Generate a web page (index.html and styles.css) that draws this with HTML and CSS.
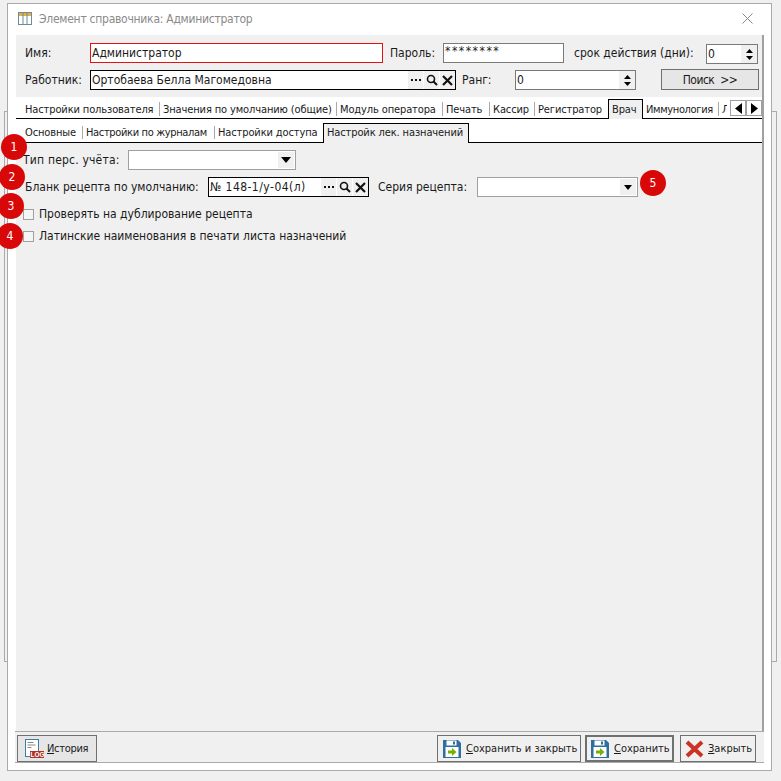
FILE: index.html
```html
<!DOCTYPE html>
<html lang="ru">
<head>
<meta charset="utf-8">
<title>Элемент справочника: Администратор</title>
<link rel="stylesheet" href="styles.css">
</head>
<body>
<div class="backwin"></div>
<main class="window">
  <header class="titlebar">
    <svg class="appicon" width="14" height="13" viewBox="0 0 14 13"><rect x="0.5" y="0.5" width="13" height="12" fill="#fff" stroke="#6f8a9c"/><rect x="1" y="1" width="12" height="3" fill="#e0b040"/><path d="M5 1v11M9 1v11" stroke="#6f8a9c" fill="none"/></svg>
    <span class="title">Элемент справочника: Администратор</span>
    <svg class="closeicon" width="11" height="11" viewBox="0 0 11 11"><path d="M0.5 0.5l10 10M10.5 0.5l-10 10" stroke="#888" fill="none"/></svg>
  </header>
  <section class="panel">
    <div class="head">
      <div class="hrow">
        <label class="lbl w-name">Имя:</label>
        <div class="field f-name"><span class="val">Администратор</span></div>
        <label class="lbl w-pass">Пароль:</label>
        <div class="field f-pass"><span class="val v-pass">********</span></div>
        <label class="lbl w-term">срок действия (дни):</label>
        <div class="field f-term"><span class="val">0</span>
          <span class="spin"><svg width="7" height="4" viewBox="0 0 7 4"><path d="M3.5 0L7 4H0z"/></svg><svg width="7" height="4" viewBox="0 0 7 4"><path d="M0 0h7L3.500 4z"/></svg></span>
        </div>
      </div>
      <div class="hrow hrow2">
        <label class="lbl w-name">Работник:</label>
        <div class="field f-worker"><span class="val">Ортобаева Белла Магомедовна</span>
          <span class="tool"><svg width="10" height="2" viewBox="0 0 10 2"><path d="M0 0h2v2H0zM4 0h2v2H4zM8 0h2v2H8z" fill="#111"/></svg></span>
          <span class="tool"><svg width="12" height="12" viewBox="0 0 12 12"><circle cx="5" cy="5" r="3.500" fill="none" stroke="#111" stroke-width="1.600"/><path d="M7.500 7.500l3.500 3.500" stroke="#111" stroke-width="2"/></svg></span>
          <span class="tool"><svg width="11" height="11" viewBox="0 0 11 11"><path d="M1 1l9 9M10 1l-9 9" stroke="#111" stroke-width="2.200"/></svg></span>
        </div>
        <label class="lbl w-rank">Ранг:</label>
        <div class="field f-rank"><span class="val">0</span>
          <span class="spin"><svg width="7" height="4" viewBox="0 0 7 4"><path d="M3.5 0L7 4H0z"/></svg><svg width="7" height="4" viewBox="0 0 7 4"><path d="M0 0h7L3.500 4z"/></svg></span>
        </div>
        <button class="search">Поиск &nbsp;&gt;&gt;</button>
      </div>
    </div>
    <nav class="tabs tabs1">
      <span class="tab">Настройки пользователя</span>
      <span class="tab">Значения по умолчанию (общие)</span>
      <span class="tab">Модуль оператора</span>
      <span class="tab">Печать</span>
      <span class="tab">Кассир</span>
      <span class="tab plain">Регистратор</span>
      <span class="tab active">Врач</span>
      <span class="tab tight">Иммунология</span>
      <span class="tab plain clip">Л</span>
      <span class="arrow"><svg width="7" height="11" viewBox="0 0 7 11"><path d="M7 0v11L0 5.500z"/></svg></span>
      <span class="arrow"><svg width="7" height="11" viewBox="0 0 7 11"><path d="M0 0v11L7 5.500z"/></svg></span>
    </nav>
    <nav class="tabs tabs2">
      <span class="tab">Основные</span>
      <span class="tab tight">Настройки по журналам</span>
      <span class="tab plain">Настройки доступа</span>
      <span class="tab active">Настройк лек. назначений</span>
    </nav>
    <div class="content">
      <div class="crow crow1">
        <label class="clbl c-type">Тип перс. учёта:</label>
        <div class="combo c-wide"><span class="drop big"><svg width="10" height="6" viewBox="0 0 10 6"><path d="M0 0h10L5 6z"/></svg></span></div>
      </div>
      <div class="crow crow2">
        <label class="clbl c-blank">Бланк рецепта по умолчанию:</label>
        <div class="field f-blank"><span class="val v-blank">№ 148-1/у-04(л)</span>
          <span class="tool"><svg width="10" height="2" viewBox="0 0 10 2"><path d="M0 0h2v2H0zM4 0h2v2H4zM8 0h2v2H8z" fill="#111"/></svg></span>
          <span class="tool"><svg width="12" height="12" viewBox="0 0 12 12"><circle cx="5" cy="5" r="3.500" fill="none" stroke="#111" stroke-width="1.600"/><path d="M7.500 7.500l3.500 3.500" stroke="#111" stroke-width="2"/></svg></span>
          <span class="tool"><svg width="11" height="11" viewBox="0 0 11 11"><path d="M1 1l9 9M10 1l-9 9" stroke="#111" stroke-width="2.200"/></svg></span>
        </div>
        <label class="clbl c-series">Серия рецепта:</label>
        <div class="combo c-series-box"><span class="drop"><svg width="8" height="5" viewBox="0 0 8 5"><path d="M0 0h8L4 5z"/></svg></span></div>
      </div>
      <div class="crow crow3"><span class="check"></span><label class="clbl">Проверять на дублирование рецепта</label></div>
      <div class="crow crow4"><span class="check"></span><label class="clbl">Латинские наименования в печати листа назначений</label></div>
    </div>
    <footer class="foot">
      <button class="btn b-hist">
        <svg width="19" height="20" viewBox="0 0 19 20"><rect x="0.500" y="0.500" width="13" height="17" fill="#fff" stroke="#3d7ba8"/><path d="M2.500 3.500h6M2.500 6h8M2.500 8.500h4" stroke="#888" fill="none"/><rect x="5" y="12" width="14" height="7" fill="#b03028"/><text x="5.600" y="18" class="logtxt">LOG</text></svg>
        <span><u>И</u>стория</span>
      </button>
      <span class="spacer"></span>
      <button class="btn b-saveclose">
        <svg width="18" height="18" viewBox="0 0 18 18"><path d="M0 0h15l3 3v15H0z" fill="#2f6f9f"/><rect x="3.500" y="0.500" width="10" height="5" fill="#fff"/><rect x="10" y="1.500" width="2" height="3" fill="#2f6f9f"/><rect x="2.500" y="7" width="13" height="10" fill="#fff"/><path d="M5 10.500h4V8l4.500 4L9 16v-2.500H5z" fill="#76b000"/></svg>
        <span><u>С</u>охранить и закрыть</span>
      </button>
      <button class="btn b-save">
        <svg width="18" height="18" viewBox="0 0 18 18"><path d="M0 0h15l3 3v15H0z" fill="#2f6f9f"/><rect x="3.500" y="0.500" width="10" height="5" fill="#fff"/><rect x="10" y="1.500" width="2" height="3" fill="#2f6f9f"/><rect x="2.500" y="7" width="13" height="10" fill="#fff"/><path d="M5 10.500h4V8l4.500 4L9 16v-2.500H5z" fill="#76b000"/></svg>
        <span><u>С</u>охранить</span>
      </button>
      <button class="btn b-close">
        <svg width="19" height="18" viewBox="0 0 19 18"><path d="M2 2l15 14M17 2L2 16" stroke="#cc3322" stroke-width="4" fill="none"/></svg>
        <span><u>З</u>акрыть</span>
      </button>
    </footer>
  </section>
</main>
<span class="badge b1">1</span>
<span class="badge b2">2</span>
<span class="badge b3">3</span>
<span class="badge b4">4</span>
<span class="badge b5">5</span>
</body>
</html>
```
FILE: styles.css
```css
* { box-sizing: border-box; }
html, body { margin: 0; padding: 0; }
body {
  position: relative;
  width: 781px;
  height: 781px;
  overflow: hidden;
  background: #f0f0f0;
  font-family: "DejaVu Sans Condensed", "DejaVu Sans", sans-serif;
  font-stretch: condensed;
  font-size: 12px;
  color: #1a1a1a;
}
svg { flex: none; display: block; }
.backwin {
  position: absolute;
  left: 4px; top: 111px;
  width: 773px; height: 551px;
  border: 1px solid #aaa;
  background: #f0f0f0;
}
.window {
  position: absolute;
  left: 7px; top: 3px;
  width: 765px; height: 768px;
  border: 1px solid #aaa;
  background: #fff;
  display: flex;
  flex-direction: column;
  padding: 0 7px 7px 8px;
}
.titlebar {
  height: 31px;
  flex: none;
  display: flex;
  align-items: center;
  padding: 0 0 2px 2px;
  color: #8a8a8a;
}
.appicon { margin-right: 7px; }
.title { flex: 1; letter-spacing: -0.26px; }
.closeicon { margin-right: 11px; }
.panel {
  flex: 1;
  display: flex;
  flex-direction: column;
  border-right: 2px solid #a0a0a0;
  min-height: 0;
}
.head {
  flex: none;
  height: 62px;
  background: #f0f0f0;
  padding: 8px 0 0 9px;
}
.hrow { display: flex; align-items: flex-start; height: 20px; line-height: 20px; }
.hrow2 { margin-top: 7px; }
.lbl { flex: none; }
.w-name { width: 65px; }
.w-pass { width: 53px; margin-left: 7px; }
.w-term { width: 132px; margin-left: 10px; }
.w-rank { width: 53px; margin-left: 6px; }
.field {
  flex: none;
  height: 20px;
  border: 1px solid #7a7a7a;
  background: #fff;
  display: flex;
  align-items: center;
  padding-left: 1px;
  overflow: hidden;
}
.val { flex: 1; white-space: nowrap; }
.f-name { width: 293px; border-color: #e81010; }
.f-pass { width: 121px; align-items: flex-start; line-height: 15px; }
.v-pass { letter-spacing: 1.5px; }
.f-term { width: 52px; margin-top: 1px; }
.f-worker { width: 366px; border-color: #000; }
.f-rank { width: 121px; }
.f-blank { width: 161px; border-color: #000; }
.v-blank { letter-spacing: 0.45px; }
.spin {
  flex: none;
  width: 16px;
  height: 18px;
  display: flex;
  flex-direction: column;
  align-items: center;
  justify-content: space-around;
  background: #f0f0f0;
  padding: 2px 0;
}
.tool {
  flex: none;
  width: 15px;
  height: 18px;
  background: #f0f0f0;
  margin-left: 1px;
  display: flex;
  align-items: center;
  justify-content: center;
}
.search {
  flex: none;
  width: 98px;
  height: 21px;
  margin: -1px 0 0 25px;
  border: 1px solid #707070;
  background: #e6e6e6;
  font: inherit;
  letter-spacing: -0.5px;
  color: #1a1a1a;
  padding: 0;
}
.tabs {
  flex: none;
  display: flex;
  align-items: flex-start;
  background: #fff;
  border-bottom: 1px solid #000;
  white-space: nowrap;
  font-size: 11px;
  letter-spacing: -0.12px;
  padding: 3px 0 0 6px;
}
.tabs1 { height: 22px; }
.tabs2 { height: 24px; }
.tab {
  flex: none;
  padding-left: 3px;
  border-right: 1px solid #a9a9a9;
}
.tab.tight { letter-spacing: -0.35px; }
.tabs1 .tab { height: 14px; margin-top: 2px; line-height: 16px; }
.tabs2 .tab { height: 13px; margin-top: 4px; line-height: 14px; }
.tab.plain { border-right: 0; }
.tabs .tab.active {
  border: 1px solid #000;
  border-bottom: 0;
  background: #f0f0f0;
  height: 20px;
  padding-left: 3px;
}
.tabs1 .tab.active { margin-top: -1px; line-height: 20px; }
.tabs2 .tab.active { margin-top: 1px; line-height: 18px; }
.tabs1 .tab:nth-child(1) { width: 138px; }
.tabs1 .tab:nth-child(2) { width: 177px; }
.tabs1 .tab:nth-child(3) { width: 106px; }
.tabs1 .tab:nth-child(4) { width: 47px; }
.tabs1 .tab:nth-child(5) { width: 45px; }
.tabs1 .tab:nth-child(6) { width: 73px; }
.tabs1 .tab:nth-child(7) { width: 35px; }
.tabs1 .tab:nth-child(8) { width: 76px; }
.tabs1 .tab:nth-child(9) { width: 8px; overflow: hidden; margin-right: 3px; }
.tabs2 .tab:nth-child(1) { width: 61px; }
.tabs2 .tab:nth-child(2) { width: 132px; }
.tabs2 .tab:nth-child(3) { width: 108px; }
.tabs2 .tab:nth-child(4) { width: 146px; }
.arrow {
  flex: none;
  width: 16px;
  height: 16px;
  border: 1px solid #a0a0a0;
  background: #fff;
  display: flex;
  align-items: center;
  justify-content: center;
}
.content {
  flex: 1;
  background: #f0f0f0;
  min-height: 0;
}
.crow { display: flex; align-items: center; height: 20px; white-space: nowrap; }
.crow1 { margin-top: 7px; padding-left: 7px; }
.crow2 { margin-top: 7px; padding-left: 9px; }
.crow3 { margin-top: 6px; padding-left: 7px; height: 22px; }
.crow4 { padding-left: 7px; height: 22px; }
.c-type { width: 105px; letter-spacing: 0.2px; }
.c-blank { width: 183px; }
.c-series { width: 99px; margin-left: 9px; }
.combo {
  flex: none;
  height: 20px;
  border: 1px solid #a0a0a0;
  background: #fff;
  display: flex;
  justify-content: flex-end;
  align-items: stretch;
  padding: 1px;
}
.c-wide { width: 168px; }
.c-series-box { width: 161px; }
.drop {
  width: 16px;
  background: #f0f0f0;
  display: flex;
  align-items: center;
  justify-content: center;
}
.check {
  flex: none;
  width: 11px;
  height: 11px;
  border: 1px solid #a0a0a0;
  background: #f5f5f5;
  margin-right: 5px;
}
.foot {
  flex: none;
  height: 32px;
  margin: 0 -2px 0 -1px;
  background: #f0f0f0;
  border-top: 1px solid #aaa;
  border-bottom: 1px solid #aaa;
  display: flex;
  align-items: flex-end;
  padding: 0 8px 0 2px;
}
.spacer { flex: 1; }
.btn {
  flex: none;
  height: 27px;
  border: 1px solid #707070;
  background: #f0f0f0;
  font: inherit;
  font-size: 11px;
  color: #1a1a1a;
  display: flex;
  align-items: center;
  padding: 0;
  margin: 0;
  white-space: nowrap;
}
.b-hist { width: 80px; background: #e6e6e6; padding-left: 7px; gap: 3px; letter-spacing: -0.3px; }
.b-saveclose { width: 144px; padding-left: 5px; gap: 5px; }
.b-save { width: 89px; margin-left: 4px; border-width: 2px; padding-left: 4px; gap: 5px; }
.b-close { width: 76px; margin-left: 6px; padding-left: 4px; gap: 4px; }
.logtxt { font: 700 6.500px "Liberation Sans", sans-serif; fill: #fff; letter-spacing: 0; }
.badge {
  position: absolute;
  width: 26px;
  height: 26px;
  border-radius: 50%;
  background: #d90808;
  color: #fff;
  display: flex;
  align-items: center;
  justify-content: center;
  font-size: 12px;
}
.b1 { left: 1px; top: 134px; }
.b2 { left: -1px; top: 164px; }
.b3 { left: -2px; top: 193px; }
.b4 { left: -3px; top: 223px; }
.b5 { left: 640px; top: 170px; }
```
